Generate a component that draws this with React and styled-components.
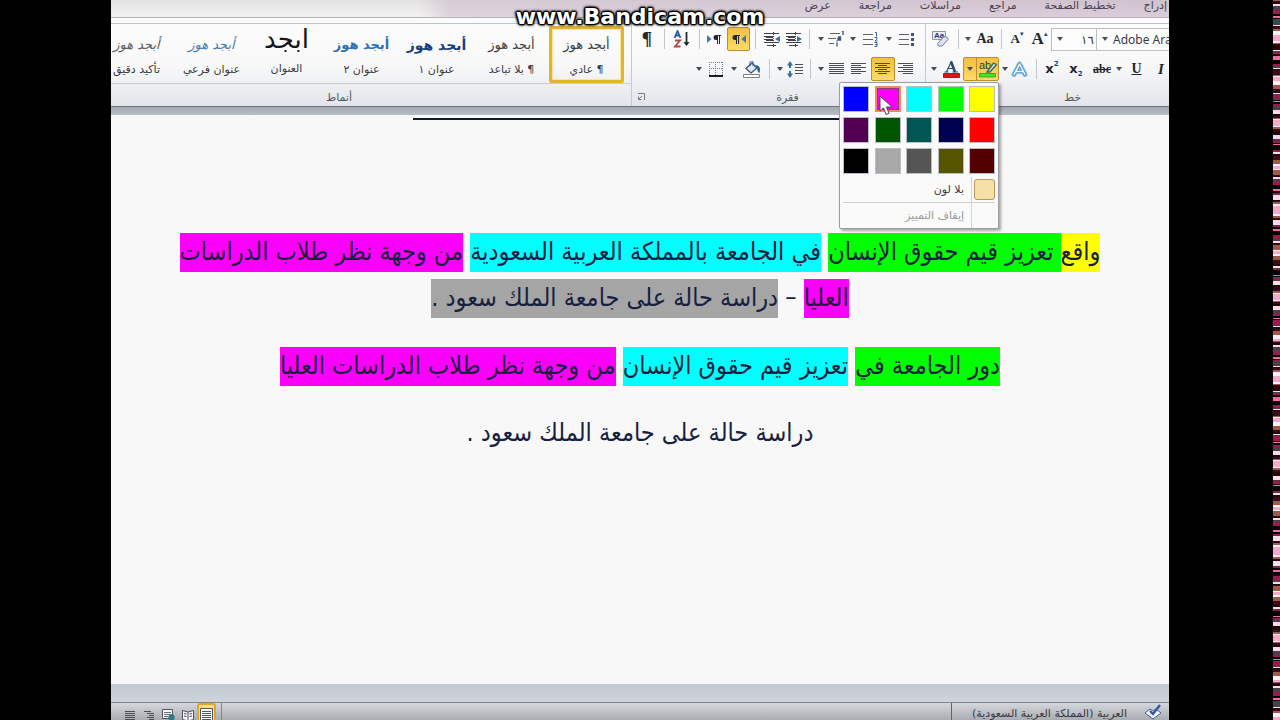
import styled, { createGlobalStyle, css } from 'styled-components';

const ui = '"DejaVu Sans", sans-serif';
const body = '"DejaVu Sans Condensed", "DejaVu Sans", sans-serif';
const serif = '"Liberation Serif", "DejaVu Serif", serif';

const GlobalStyle = createGlobalStyle`
	* { box-sizing: border-box; }
	body {
		margin: 0;
		background: #000;
		font-family: ${ui};
		font-size: 11px;
		color: #3a3a3f;
	}
	button, select {
		font: inherit;
		color: inherit;
		border: 0;
		padding: 0;
		margin: 0;
		background: none;
	}
	svg { display: block; flex: none; }
`;

const Screen = styled.div`
	position: relative;
	display: grid;
	grid-template-columns: 111px minmax(0, 1fr) 104px 7px;
	height: 100vh;
	overflow: hidden;
	background: #000;
`;

const Noise = styled.div`
	grid-column: 4;
	background: ${({ $stops }) => `repeating-linear-gradient(${$stops})`};
`;

const Watermark = styled.div`
	position: absolute;
	top: 4px;
	left: 0;
	right: 0;
	text-align: center;
	font: bold 22px/26px ${ui};
	font-size: 22px;
	color: #fff;
	text-shadow: -1px 0 1px #000, 1px 0 1px #000, 0 -1px 1px #000, 0 1px 1px #000,
		1px 1px 2px #000, -1px -1px 2px #000, 1px -1px 2px #000, -1px 1px 2px #000, 0 0 4px #000;
	pointer-events: none;
	z-index: 5;
`;

const Window = styled.div`
	grid-column: 2;
	display: flex;
	flex-direction: column;
	min-height: 0;
	overflow: hidden;
	background: #f8f8f8;
`;

const Tabs = styled.nav`
	display: flex;
	direction: rtl;
	gap: 28px;
	height: 18px;
	flex: none;
	padding: 0 2px;
	background: linear-gradient(to left, #b493b066, #c3a9c066 68%, transparent 71%),
		linear-gradient(#e2e2e2, #f3f2f3);
	border-bottom: 1px solid #b5b2b6;
`;

const Tab = styled.button`
	height: 12px;
	line-height: 12px;
	white-space: nowrap;
	color: #4a4350;
`;

const Ribbon = styled.div`
	display: flex;
	flex: none;
	height: 89px;
	padding-top: 5px;
	background: linear-gradient(#fbfbfb 5px, #c3c3c6 5px, #c3c3c6 6px, #fcfcfc 6px, #f8f8f9 55%, #e2e5ea);
	border-bottom: 1px solid #70747a;
`;

const Group = styled.section`
	display: flex;
	flex-direction: column;
	flex: ${({ $w }) => ($w ? `0 0 ${$w}px` : '1 1 0')};
	min-width: 0;
	padding-top: 1px;
	border-right: 1px solid #c6c9ce;
	&:last-child { border-right: 0; }
`;

const GroupLabel = styled.div`
	display: flex;
	justify-content: center;
	position: relative;
	height: 22px;
	line-height: 27px;
	padding-left: ${({ $pad = 0 }) => $pad}px;
	padding-right: ${({ $end = 0 }) => $end}px;
	color: #55595f;
`;

const Launcher = styled.button`
	position: absolute;
	left: 5px;
	top: 9px;
`;

const Row = styled.div`
	display: flex;
	align-items: center;
	justify-content: ${({ $end }) => ($end ? 'flex-end' : 'flex-start')};
	padding-right: ${({ $end }) => ($end ? 8 : 0)}px;
	height: 30px;
`;

const active = css`
	background: linear-gradient(#f3bf45, #f8cf52 60%, #fddb6c);
	border: 1px solid #b98f32;
	border-radius: 2px;
`;

const Tool = styled.button`
	display: flex;
	align-items: center;
	justify-content: center;
	flex: none;
	width: ${({ $w = 22 }) => $w}px;
	height: 24px;
	${({ $active }) => $active && active}
`;

const Glyph = styled(Tool)`
	font-family: ${({ $sans }) => ($sans ? ui : serif)};
	font-weight: bold;
	font-style: ${({ $italic }) => ($italic ? 'italic' : 'normal')};
	font-size: ${({ $size = 16 }) => $size}px;
	line-height: 20px;
	text-decoration: ${({ $line = 'none' }) => $line};
	color: #26262c;
	sup, sub {
		font-size: 7px;
		line-height: 8px;
		color: #1d3c7a;
	}
	sup { align-self: flex-start; margin-top: 3px; }
	sub { align-self: flex-end; margin-bottom: 3px; }
`;

const Sep = styled.span`
	flex: none;
	width: ${({ $w = 10 }) => $w}px;
	height: 20px;
	background: linear-gradient(#c2c6cc, #c2c6cc) center / 1px 100% no-repeat;
`;

const Field = styled.label`
	position: relative;
	display: flex;
	align-items: center;
	flex: none;
	width: ${({ $w }) => $w}px;
	height: 23px;
	margin-right: -1px;
	border: 1px solid #bcbec3;
	background: #fdfdfd;
	svg { position: absolute; left: 5px; }
	select {
		appearance: none;
		width: 100%;
		padding: 0 2px 0 16px;
		direction: ltr;
		text-align: ${({ $align = 'left' }) => $align};
		text-align-last: ${({ $align = 'left' }) => $align};
		font-family: "Noto Sans", ${ui};
		font-size: 12px;
	}
`;

const Split = styled.div`
	position: relative;
	display: flex;
	margin-left: 2px;
	${active}
	button { height: 22px; }
	button + button { border-left: 1px solid #b98f32; }
`;

const Palette = styled.div`
	position: absolute;
	z-index: 3;
	top: 24px;
	right: -1px;
	width: 160px;
	padding: 3px 3px 0;
	background: #fafafa;
	border: 1px solid #9b9da2;
	border-radius: 2px;
	box-shadow: 2px 2px 3px #0005;
`;

const Swatches = styled.div`
	display: grid;
	direction: rtl;
	grid-template-columns: repeat(5, 26px);
	justify-content: space-between;
	row-gap: 5px;
	padding-bottom: 2px;
`;

const Swatch = styled.button`
	&& {
		height: 26px;
		background: ${({ $color }) => $color};
		border: 1px solid #b9bdc4;
		${({ $hover }) => $hover && 'border: 2px solid #ee8a5c; box-shadow: inset 0 0 0 1px #8c3a78;'}
	}
`;

const PaletteItem = styled.button`
	&& {
		display: grid;
		grid-template-columns: 23px 1fr;
		direction: rtl;
		align-items: center;
		width: 100%;
		height: 26px;
		border: 0;
		text-align: right;
		color: ${({ disabled }) => (disabled ? '#9b9b9b' : '#3a3a3f')};
	}
	&& + && { border-top: 1px solid #cfd0d3; }
	span:last-child {
		border-right: 1px solid #d3d4d7;
		padding-right: 7px;
		line-height: 25px;
	}
`;

const NoColor = styled.span`
	width: 21px;
	height: 21px;
	border: ${({ $empty }) => ($empty ? '0' : '1px solid #c2955a')};
	border-radius: 3px;
	background: ${({ $empty }) => ($empty ? 'none' : '#f5e1a6')};
`;

const Pointer = styled.svg`
	position: absolute;
	left: 39px;
	top: 12px;
`;

const Gallery = styled.div`
	display: flex;
	justify-content: flex-end;
	height: 61px;
	padding: 2px 7px 0 0;
	overflow: hidden;
	border-bottom: 1px solid #cccdd1;
`;

const StyleTile = styled.button`
	display: flex;
	flex-direction: column;
	align-items: center;
	flex: none;
	width: 75px;
	height: 57px;
	direction: rtl;
	white-space: nowrap;
	border: 3px solid transparent;
	${({ $selected }) => $selected && 'border-color: #e3b52f; box-shadow: inset 0 0 0 1px #f9e59a; border-radius: 2px;'}
`;

const Sample = styled.span`
	height: 30px;
	line-height: ${({ $tight }) => ($tight ? 20 : 32)}px;
	font-size: ${({ $size = 13 }) => $size}px;
	font-weight: ${({ $bold }) => ($bold ? 'bold' : 'normal')};
	font-style: ${({ $italic }) => ($italic ? 'italic' : 'normal')};
	color: ${({ $color = '#3a3a3f' }) => $color};
`;

const StyleName = styled.span`
	line-height: 22px;
`;

const Band = styled.div`
	flex: none;
	height: ${({ $h }) => $h}px;
	background: ${({ $from, $to }) => `linear-gradient(${$from}, ${$to})`};
`;

const Page = styled.main`
	flex: 1;
	min-height: 0;
	overflow: hidden;
	direction: rtl;
	text-align: center;
	background: #f8f8f8;
	color: #16213f;
	font-family: ${body};
	font-size: 25px;
	line-height: 46px;
	white-space: nowrap;
`;

const Rule = styled.hr`
	width: 454px;
	height: 2px;
	margin: 3px auto 108px;
	border: 0;
	background: #14182a;
`;

const Paragraph = styled.p`
	margin: 0 0 22px;
`;

const Mark = styled.mark`
	display: inline-block;
	height: 39px;
	line-height: 38px;
	vertical-align: middle;
	color: inherit;
	background: ${({ $color }) => $color};
`;

const StatusBar = styled.footer`
	display: flex;
	align-items: center;
	flex: none;
	height: 18px;
	border-top: 1px solid #7f848a;
	background: linear-gradient(#d4d7db, #a9adb3);
	overflow: hidden;
`;

const ViewButton = styled.button`
	display: flex;
	align-items: flex-end;
	justify-content: center;
	width: 19px;
	height: 18px;
	${({ $active }) => $active && 'border: 2px solid #d9a92f; border-bottom: 0; border-radius: 3px 3px 0 0; background: #f7dc7a;'}
`;

const Views = styled.div`
	display: flex;
	padding: 0 5px 0 10px;
	border-right: 1px solid #85898f;
`;

const Language = styled.button`
	margin-left: auto;
	height: 18px;
	padding: 4px 10px 0 20px;
	line-height: 14px;
	border-left: 1px solid #5f6369;
	direction: rtl;
	white-space: nowrap;
`;

const Caret = () => (
	<svg width="6" height="4"><path d="M0 0h6L3 4z" fill="#4a4d55" /></svg>
);

const Drop = ({ w, label }) => <Tool $w={w} aria-label={label}><Caret /></Tool>;

// Horizontal strokes of a paragraph icon, one [x, width] pair per line.
const Lines = ({ rows, gap = 2, color = '#4b4e55', width = 16 }) => (
	<svg width={width} height={rows.length * gap} shapeRendering="crispEdges">
		{rows.map(([x, w], i) => <rect key={i} x={x} y={i * gap} width={w} height="1" fill={color} />)}
	</svg>
);

const full = [0, 15];

const SortIcon = () => (
	<svg width="18" height="18" viewBox="0 0 18 18">
		<g fill="none" strokeWidth="1.8">
			<path d="M1.5 8 4.500 1l3 7M2.500 5.500h4" stroke="#2d5b9e" />
			<path d="M2 10.500h5l-5 6h5.500" stroke="#b0463c" />
			<path d="M13.500 2v13" stroke="#24272f" />
		</g>
		<path d="M10.500 12h6l-3 4z" fill="#24272f" />
	</svg>
);

const DirIcon = ({ left }) => (
	<svg width="14" height="12" viewBox="0 0 14 12">
		<path d={left ? 'M14 2v8L9.500 6z' : 'M0 2v8L4.500 6z'} fill="#3a78b8" />
		<g transform={left ? 'translate(-1 0)' : 'translate(5 0)'} fill="#26272e">
			<path d="M9 2H4a2.500 2.500 0 0 0 0 5h1v4h1V3h1v8h1V3h1z" />
		</g>
	</svg>
);

const IndentIcon = ({ out }) => (
	<svg width="17" height="15" viewBox="0 0 17 15">
		<g stroke="#3f424a" shapeRendering="crispEdges">
			<path d="M1 1.500h15M1 4.500h9M1 7.500h9M1 10.500h15M4 13.500h9" />
			<path d="M3 5.500h7M3 8.500h7" />
			<path d="M10.500 0v15" strokeDasharray="1 1" />
		</g>
		<path d={out ? 'M17 4v6l-5-3z' : 'M12 4v6l5-3z'} fill="#3c6fb0" />
	</svg>
);

const ListIcon = ({ numbers }) => (
	<svg width="16" height="15" viewBox="0 0 16 15">
		<path d="M0 2.500h10M0 7.500h10M0 12.500h10" stroke="#5f6269" shapeRendering="crispEdges" />
		{numbers
			? <path d="M12 .5h1.500v4M11.500 5.500h2.500v1.500l-2 2h2.500M11.500 10.500h2.500v4h-2.500M12 12.500h2" fill="none" stroke="#3c6597" />
			: <path d="M12 1h3v3h-3zM12 6h3v3h-3zM12 11h3v3h-3z" fill="#33598c" />}
	</svg>
);

const LevelsIcon = () => (
	<svg width="18" height="16" viewBox="0 0 18 16">
		<path d="M3 2.500h10M1 7.500h8M2 12.500h5" stroke="#5f6269" shapeRendering="crispEdges" />
		<path d="M15 1l1-1v4M11 6h2.500v3H11V7.500h2.500M10 11.500v4M10 9.500v1" fill="none" stroke="#33598c" strokeWidth="1.300" />
	</svg>
);

const BorderIcon = () => (
	<svg width="14" height="15" viewBox="0 0 14 15" shapeRendering="crispEdges">
		<path d="M.5 0v13M6.500 0v13M13.500 0v13M0 .5h14M0 6.500h14" stroke="#777a80" strokeDasharray="1 1" />
		<path d="M0 13.500h14" stroke="#1d1e22" strokeWidth="2" />
	</svg>
);

const BucketIcon = () => (
	<svg width="18" height="17" viewBox="0 0 18 17">
		<path d="M3 7.500 9 2l5 5-6 5z" fill="#dfe9f4" stroke="#3a577b" strokeWidth="1.300" />
		<path d="M7 5V1.500a1.500 1.500 0 0 1 3 0V5" fill="none" stroke="#3a577b" />
		<path d="M11 4c6 0 7 3 5.500 8-3-1-1-5-5-6z" fill="#3463a5" />
		<path d="M.5 13.500h16v3H.5z" fill="#fff" stroke="#7d8189" />
	</svg>
);

const SpacingIcon = () => (
	<svg width="17" height="17" viewBox="0 0 17 17">
		<path d="M8 3.500h8M8 6.500h8M8 9.500h8M8 12.500h8" stroke="#4b4e55" shapeRendering="crispEdges" />
		<path d="M3 0l3 4.500H4V7H2V4.500H0zM3 17l3-4.500H4V10H2v2.500H0z" fill="#3b6baa" />
	</svg>
);

const ClearIcon = () => (
	<svg width="18" height="18" viewBox="0 0 18 18">
		<path d="M1.500 1.500h13v8h-13z" fill="#e8ecf3" stroke="#8c97aa" />
		<text x="3" y="8" fontSize="8" fontWeight="bold" fontFamily="Liberation Sans" fill="#27407a">Aa</text>
		<path d="M6.500 13.500 12.500 7q4.500-1 4.500 2.500l-6 6.500H7.500z" fill="#dde4f1" stroke="#6b7a94" />
	</svg>
);

const FontColorIcon = () => (
	<svg width="17" height="18" viewBox="0 0 17 18">
		<path d="M5.500 8.500h5M1.500 12h4M9.500 12h5.500M3.500 12l5-11" fill="none" stroke="#2c4a80" strokeWidth="1.200" />
		<path d="M8 1.500 12 12" stroke="#2c4a80" strokeWidth="2.600" />
		<path d="M.5 13.500h16v4H.5z" fill="#d81414" stroke="#a02020" />
	</svg>
);

const HighlightIcon = () => (
	<svg width="18" height="18" viewBox="0 0 18 18">
		<text x="0" y="9" fontSize="11" fontFamily="Liberation Sans" fill="#2c3d3c">ab</text>
		<path d="M8 12 14.500 3l3 1.500L11 12z" fill="#c4dfe8" stroke="#3d6b4c" strokeWidth="1.300" />
		<path d="M.5 13.500h16v3.500H.5z" fill="#3bea2a" stroke="#5a9a28" />
	</svg>
);

const TextEffectIcon = () => (
	<svg width="17" height="17" viewBox="0 0 17 17" fill="none" strokeLinejoin="round" strokeLinecap="round">
		<path d="M3 13.500 8.500 3 14 13.500M5.500 10.500h6" stroke="#a8d3ee" strokeWidth="5.500" />
		<path d="M3 13.500 8.500 3 14 13.500M5.500 10.500h6" stroke="#4c93c6" strokeWidth="3.600" />
		<path d="M3 13.500 8.500 3 14 13.500M5.500 10.500h6" stroke="#eef7fc" strokeWidth="1.600" />
	</svg>
);

const LauncherIcon = () => (
	<svg width="8" height="8" viewBox="0 0 8 8" fill="none" stroke="#777b82">
		<path d="M1 .5h6.500V7M5 3 1.500 6.500M1.500 3.500v3h3" />
	</svg>
);

const ProofIcon = () => (
	<svg width="18" height="16" viewBox="0 0 18 16">
		<path d="M1 9l5-4 3 2 3-2 5 4-8 6z" fill="#f4f7fd" stroke="#3d5c9c" />
		<path d="M6 7l3 3 7-9" fill="none" stroke="#3457a8" strokeWidth="2.400" />
	</svg>
);

const ReadingIcon = () => (
	<svg width="12" height="12" viewBox="0 0 12 12" fill="#f3f4f6" stroke="#50545b">
		<path d="M.5 1.500 6 3l5.500-1.500v9L6 12 .5 10.500zM6 3v9M2 4.500l2.500.5M2 7l2.500.5M7.500 5l2.500-.5M7.500 7.500 10 7" />
	</svg>
);

const WebIcon = () => (
	<svg width="13" height="12" viewBox="0 0 13 12">
		<path d="M.5.5h10v9H.5z" fill="#f3f4f6" stroke="#50545b" />
		<path d="M2 3.500h7M2 5.500h7M2 7.500h4" stroke="#6b6f76" />
		<circle cx="9.500" cy="8.500" r="3.200" fill="#2f7a84" />
	</svg>
);

const PrintIcon = () => (
	<svg width="13" height="13" viewBox="0 0 13 13">
		<path d="M.5.5h12v14H.5z" fill="#fff" stroke="#55585e" />
		<path d="M2 3.500h9M2 5.500h9M2 7.500h9M2 9.500h9M2 11.500h9" stroke="#55585e" />
	</svg>
);

const tabs = ['إدراج', 'تخطيط الصفحة', 'مراجع', 'مراسلات', 'مراجعة', 'عرض'];

const styles = [
	{ name: 'تأكيد دقيق', italic: true, color: '#5d5d62' },
	{ name: 'عنوان فرعي', italic: true, color: '#4a7db5' },
	{ name: 'العنوان', sample: 'ابجد', size: 26, tight: true, color: '#16161c' },
	{ name: 'عنوان ٢', bold: true, color: '#2f6fb5' },
	{ name: 'عنوان ١', bold: true, size: 14, color: '#173f7c' },
	{ name: '¶ بلا تباعد' },
	{ name: '¶ عادي', selected: true },
];

const colors = [
	'#ffff00', '#00ff00', '#00ffff', '#ff00ff', '#0000ff',
	'#ff0000', '#000052', '#005555', '#005500', '#520052',
	'#520000', '#555500', '#555555', '#a8a8a8', '#000000',
];

const noise = ['#a05a48', '#5a1030', '#c86a90', '#1c0a10', '#8c1848', '#ffd9ea', '#3a0c1c', '#8a3a68', '#f06aa8', '#000', '#d8508c', '#6e6470', '#9a1c4c', '#f8a8cc', '#240810', '#fff0f6', '#c03870', '#4c4048', '#7c1038'];

// Stripes of 1 to 5px, long enough that the eye finds no repeat.
const buildStops = () => {
	let y = 0;
	return Array.from({ length: 150 }, (_, i) => {
		const from = y;
		y += 1 + ((i * i * 7 + i * 3) % 11) % 5;
		return `${noise[(i * i + i * 5) % noise.length]} ${from}px ${y}px`;
	}).join(', ');
};

const noiseStops = buildStops();

const Styles = () => (
	<Group>
		<Gallery>
			{styles.map(({ name, sample = 'أبجد هوز', size, tight, bold, italic, color, selected }) => (
				<StyleTile key={name} $selected={selected}>
					<Sample $size={size} $tight={tight} $bold={bold} $italic={italic} $color={color}>{sample}</Sample>
					<StyleName>{name}</StyleName>
				</StyleTile>
			))}
		</Gallery>
		<GroupLabel $end={64}>أنماط</GroupLabel>
	</Group>
);

const ParagraphTools = () => (
	<Group $w={294}>
		<Row $end>
			<Glyph $w={30} $size={19}>¶</Glyph>
			<Sep $w={4} />
			<Tool $w={31} aria-label="فرز"><SortIcon /></Tool>
			<Sep $w={4} />
			<Tool $w={26} aria-label="من اليسار إلى اليمين"><DirIcon /></Tool>
			<Tool $w={23} $active aria-label="من اليمين إلى اليسار"><DirIcon left /></Tool>
			<Sep />
			<Tool aria-label="زيادة المسافة البادئة"><IndentIcon out /></Tool>
			<Tool aria-label="إنقاص المسافة البادئة"><IndentIcon /></Tool>
			<Sep />
			<Drop w={13} label="خيارات المستويات" />
			<Tool $w={18} aria-label="قائمة متعددة المستويات"><LevelsIcon /></Tool>
			<Drop w={16} label="خيارات الترقيم" />
			<Tool $w={20} aria-label="ترقيم"><ListIcon numbers /></Tool>
			<Drop w={16} label="خيارات التعداد" />
			<Tool $w={20} aria-label="تعداد نقطي"><ListIcon /></Tool>
		</Row>
		<Row $end>
			<Drop w={12} label="خيارات الحدود" />
			<Tool aria-label="حدود"><BorderIcon /></Tool>
			<Drop w={14} label="خيارات التظليل" />
			<Tool aria-label="تظليل"><BucketIcon /></Tool>
			<Sep $w={12} />
			<Drop w={10} label="خيارات التباعد" />
			<Tool $w={20} aria-label="تباعد الأسطر"><SpacingIcon /></Tool>
			<Sep />
			<Drop w={11} label="خيارات الضبط" />
			<Tool $w={21} aria-label="ضبط"><Lines rows={[full, full, full, full, full, full]} /></Tool>
			<Tool $w={24} aria-label="محاذاة إلى اليسار"><Lines rows={[full, [0, 10], full, [0, 10], full, [0, 10]]} /></Tool>
			<Tool $w={24} $active aria-label="توسيط"><Lines rows={[full, [3, 9], full, [3, 9], full, [3, 9]]} /></Tool>
			<Tool aria-label="محاذاة إلى اليمين"><Lines rows={[full, [5, 10], full, [5, 10], full, [5, 10]]} /></Tool>
		</Row>
		<GroupLabel $pad={18}>
			<Launcher aria-label="إعدادات الفقرة"><LauncherIcon /></Launcher>
			فقرة
		</GroupLabel>
	</Group>
);

const HighlightPalette = () => (
	<Palette>
		<Swatches>
			{colors.map(color => (
				<Swatch key={color} $color={color} $hover={color === '#ff00ff'} aria-label={color} />
			))}
		</Swatches>
		<PaletteItem>
			<NoColor />
			<span>بلا لون</span>
		</PaletteItem>
		<PaletteItem disabled>
			<NoColor $empty />
			<span>إيقاف التمييز</span>
		</PaletteItem>
		<Pointer width="14" height="21" viewBox="0 0 14 21">
			<path d="M1 1v15l3.500-3 2.500 6.500 3-1.200L7.500 12H13z" fill="#fff" stroke="#5a3a5c" />
		</Pointer>
	</Palette>
);

const FontTools = () => (
	<Group $w={243}>
		<Row>
			<Tool $w={28} aria-label="مسح التنسيق"><ClearIcon /></Tool>
			<Sep $w={8} />
			<Drop w={12} label="حالة الأحرف" />
			<Glyph $w={22} $size={14}>Aa</Glyph>
			<Sep />
			<Glyph $w={22} $size={13}>A<sup>▾</sup></Glyph>
			<Glyph $w={23} $size={17}>A<sup>▴</sup></Glyph>
			<Field $w={46} $align="right">
				<Caret />
				<select aria-label="حجم الخط"><option>١٦</option></select>
			</Field>
			<Field $w={92}>
				<Caret />
				<select aria-label="الخط"><option>Adobe Arabic</option></select>
			</Field>
		</Row>
		<Row>
			<Drop w={16} label="ألوان الخط" />
			<Tool $w={19} aria-label="لون الخط"><FontColorIcon /></Tool>
			<Split>
				<Drop w={12} label="ألوان التمييز" />
				<Tool $w={22} aria-label="لون تمييز النص"><HighlightIcon /></Tool>
				<HighlightPalette />
			</Split>
			<Drop w={11} label="خيارات التأثيرات" />
			<Tool $w={18} aria-label="تأثيرات النص"><TextEffectIcon /></Tool>
			<Sep $w={16} />
			<Glyph $w={16} $size={13} $sans>x<sup>2</sup></Glyph>
			<Glyph $w={32} $size={13} $sans>x<sub>2</sub></Glyph>
			<Glyph $w={20} $size={12} $line="line-through">abc</Glyph>
			<Drop w={14} label="أنماط التسطير" />
			<Glyph $w={21} $size={14} $line="underline">U</Glyph>
			<Glyph $w={28} $size={15} $italic>I</Glyph>
		</Row>
		<GroupLabel $pad={50}>خط</GroupLabel>
	</Group>
);

export default function App() {
	return (
		<>
			<GlobalStyle />
			<Screen>
				<Watermark>www.Bandicam.com</Watermark>
				<Window>
					<Tabs>
						{tabs.map(tab => <Tab key={tab}>{tab}</Tab>)}
					</Tabs>
					<Ribbon>
						<Styles />
						<ParagraphTools />
						<FontTools />
					</Ribbon>
					<Band $h={8} $from="#a3a8af" $to="#b9bfc7" />
					<Page>
						<Rule />
						<Paragraph>
							<Mark $color="#ffff00">واقع</Mark>
							<Mark $color="#00ff00">&nbsp;تعزيز قيم حقوق الإنسان</Mark>{' '}
							<Mark $color="#00ffff">في الجامعة بالمملكة العربية السعودية</Mark>{' '}
							<Mark $color="#fa00fa">من وجهة نظر طلاب الدراسات</Mark>
							<br />
							<Mark $color="#fa00fa">العليا</Mark>
							{' – '}
							<Mark $color="#a5a5a5">دراسة حالة على جامعة الملك سعود .</Mark>
						</Paragraph>
						<Paragraph>
							<Mark $color="#00ff00">دور الجامعة في</Mark>{' '}
							<Mark $color="#00ffff">تعزيز قيم حقوق الإنسان</Mark>{' '}
							<Mark $color="#fa00fa">من وجهة نظر طلاب الدراسات العليا</Mark>
						</Paragraph>
						<Paragraph>دراسة حالة على جامعة الملك سعود .</Paragraph>
					</Page>
					<Band $h={18} $from="#c2c8d0" $to="#ced4da" />
					<StatusBar>
						<Views>
							<ViewButton aria-label="مسودة"><Lines width={11} rows={[[0, 10], [0, 10], [0, 10], [0, 10], [0, 10]]} /></ViewButton>
							<ViewButton aria-label="مخطط تفصيلي"><Lines width={11} rows={[[0, 7], [3, 7], [5, 5], [3, 7], [5, 5]]} /></ViewButton>
							<ViewButton aria-label="تخطيط ويب"><WebIcon /></ViewButton>
							<ViewButton aria-label="قراءة"><ReadingIcon /></ViewButton>
							<ViewButton $active aria-label="تخطيط الطباعة"><PrintIcon /></ViewButton>
						</Views>
						<Language>العربية (المملكة العربية السعودية)</Language>
						<Tool $w={32} aria-label="تدقيق"><ProofIcon /></Tool>
					</StatusBar>
				</Window>
				<Noise $stops={noiseStops} />
			</Screen>
		</>
	);
}
